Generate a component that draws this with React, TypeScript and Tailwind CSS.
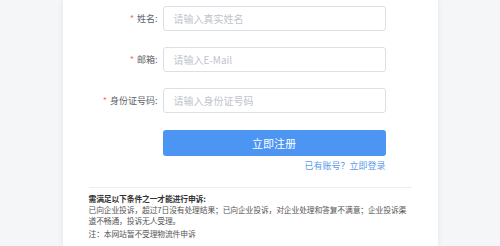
import React from "react";

export default function App() {
  const fields = [
    { label: "姓名", placeholder: "请输入真实姓名" },
    { label: "邮箱", placeholder: "请输入E-Mail" },
    { label: "身份证号码", placeholder: "请输入身份证号码" },
  ];
  return (
    <div
      className="w-[500px] h-[246px] bg-[#f5f6f8] flex justify-center overflow-hidden"
      style={{ fontFamily: '"Noto Sans CJK SC", "Noto Sans", sans-serif' }}
    >
      <div className="w-[375px] h-[246px] bg-white shadow-[0_0_6px_rgba(0,0,0,0.08)] px-[26px] pt-[6px]">
        {/* Form */}
        <div className="flex flex-col gap-[16px]">
          {fields.map((f) => (
            <div key={f.label} className="flex items-center">
              <label className="w-[69px] text-right text-[9px] text-[#606266] mr-[5px] leading-none">
                <span className="text-[#f56c6c] mr-[3px]">*</span>
                {f.label}:
              </label>
              <div className="w-[223px] h-[25px] border border-[#dcdfe6] rounded-[3px] flex items-center px-[10px] text-[10px] text-[#c0c4cc]">
                {f.placeholder}
              </div>
            </div>
          ))}
        </div>
        <div className="ml-[74px] w-[223px] mt-[16px]">
          <button className="w-full h-[26px] rounded-[3px] bg-[#4d95f2] text-white text-[11px]">
            立即注册
          </button>
          <div className="text-right text-[9px] text-[#5b9be8] mt-[4px] leading-[12px]">
            已有账号？立即登录
          </div>
        </div>
        {/* Notes */}
        <div className="border-t border-[#ebeef5] mt-[15px] pt-[5px] text-[7.8px] leading-[11px] tracking-[-0.15px] text-[#555]">
          <div className="font-bold text-[#333]">需满足以下条件之一才能进行申诉:</div>
          <div>
            已向企业投诉，超过7日没有处理结果；已向企业投诉，对企业处理和答复不满意；企业投诉渠道不畅通，投诉无人受理。
          </div>
          <div className="mt-[2px]">注：本网站暂不受理物流件申诉</div>
        </div>
      </div>
    </div>
  );
}
